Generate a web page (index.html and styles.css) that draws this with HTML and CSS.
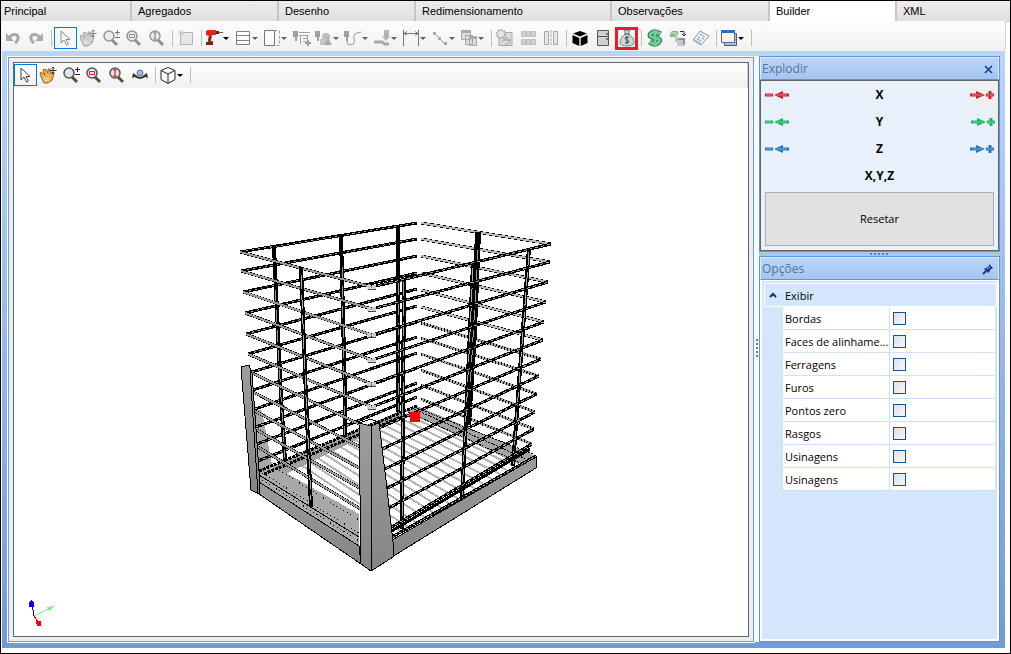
FILE: index.html
```html
<!DOCTYPE html>
<html lang="pt-BR">
<head>
  <meta charset="UTF-8" />
  <meta name="viewport" content="width=device-width, initial-scale=1.0"/>
  <title>Builder</title>
  <link rel="stylesheet" href="styles.css">
</head>
<body>
  <!-- shared icons -->
  <svg class="defs" aria-hidden="true">
    <symbol id="cursor" viewBox="0 0 20 20"><path d="M6 3v12l3-3 2.500 5 2-1-2.500-4.500h4z" fill="#fff" stroke="#444"/></symbol>
    <symbol id="hand" viewBox="0 0 20 20">
      <path d="M3 7l4 3-2-5 2-1 3 4V4h2l1 5 2-2 1 2-2 6-4 3H6l-2-4-2-5z" fill="#e8b15c" stroke="#9a5f18"/>
      <path d="M5 14l6-1M6 16l5-1" stroke="#fbe0a8"/>
      <path d="M11.500 5.500h7M15 2v7M13.500 3.500L15 2l1.500 1.500M13.500 7.500L15 9l1.500-1.500" stroke="#333" fill="none"/>
    </symbol>
    <symbol id="lens" viewBox="0 0 20 20">
      <path d="M11 12l5 5" stroke="#6b4a2b" stroke-width="3"/>
      <circle cx="8" cy="8" r="5" fill="#dbe6ec" stroke="#555" stroke-width="1.500"/>
      <path d="M5.500 7q1-2 3-2" stroke="#fff" fill="none"/>
    </symbol>
    <symbol id="zoom" viewBox="0 0 20 20"><use href="#lens"/><path d="M14 4.500h5M16.500 2v5M14 9.500h5" stroke="#222"/></symbol>
    <symbol id="zoom-window" viewBox="0 0 20 20"><use href="#lens"/><path d="M5.500 6.500h5v3h-5z" stroke="#c0282d" fill="none"/></symbol>
    <symbol id="zoom-fit" viewBox="0 0 20 20"><use href="#lens"/><path d="M8 4v8M6.500 5.500L8 4l1.500 1.500M6.500 10.500L8 12l1.500-1.500" stroke="#e0444a" fill="none" stroke-width="1.500"/></symbol>
    <symbol id="undo" viewBox="0 0 20 20"><path d="M6 11q2-6 8-4 3 4-2 8" fill="none" stroke="#777" stroke-width="3"/><path d="M3 5v8h8z" fill="#777"/></symbol>
    <symbol id="redo" viewBox="0 0 20 20"><path d="M14 11q-2-6-8-4-3 4 2 8" fill="none" stroke="#777" stroke-width="3"/><path d="M17 5v8H9z" fill="#777"/></symbol>
    <symbol id="tool" viewBox="0 0 20 20"><path d="M3 4h5v6H7v4H5v-4H3z" fill="#666"/></symbol>
    <symbol id="minus-arrow" viewBox="0 0 26 12">
      <path d="M1 6h8M17 6h8" stroke="currentColor" stroke-width="3"/>
      <path d="M10 6l9-4v8z" fill="currentColor"/>
      <path d="M2 6h6M13 6h10" stroke="#fff" stroke-opacity=".4"/>
    </symbol>
    <symbol id="arrow-plus" viewBox="0 0 26 12">
      <path d="M1 6h8M17 6h8M21 2v8" stroke="currentColor" stroke-width="3"/>
      <path d="M16 6L7 2v8z" fill="currentColor"/>
      <path d="M3 6h10M18 6h6" stroke="#fff" stroke-opacity=".4"/>
    </symbol>
  </svg>

  <div class="window">
    <nav class="tabs">
      <a class="tab" href="#">Principal</a>
      <a class="tab" href="#">Agregados</a>
      <a class="tab" href="#">Desenho</a>
      <a class="tab" href="#">Redimensionamento</a>
      <a class="tab" href="#">Observações</a>
      <a class="tab active" href="#">Builder</a>
      <a class="tab" href="#">XML</a>
    </nav>

    <div class="toolbar main-toolbar">
      <button class="tool disabled" aria-label="Desfazer"><svg class="icon"><use href="#undo"/></svg></button>
      <button class="tool disabled" aria-label="Refazer"><svg class="icon"><use href="#redo"/></svg></button>
      <span class="sep"></span>
      <button class="tool disabled selected" aria-label="Selecionar"><svg class="icon"><use href="#cursor"/></svg></button>
      <button class="tool disabled" aria-label="Mover"><svg class="icon"><use href="#hand"/></svg></button>
      <button class="tool disabled" aria-label="Zoom"><svg class="icon"><use href="#zoom"/></svg></button>
      <button class="tool disabled" aria-label="Zoom janela"><svg class="icon"><use href="#zoom-window"/></svg></button>
      <button class="tool disabled" aria-label="Zoom total"><svg class="icon"><use href="#zoom-fit"/></svg></button>
      <span class="sep"></span>
      <button class="tool disabled" aria-label="Novo"><svg class="icon" viewBox="0 0 20 20"><path d="M4.500 4.500h12v12h-12z" fill="#ddd" stroke="#888"/><path d="M5 2v6M2 5h6M3 3l4 4M7 3L3 7" stroke="#aaa"/></svg></button>
      <span class="sep"></span>
      <button class="tool drop" aria-label="Furação">
        <svg class="icon" viewBox="0 0 20 20"><path d="M2 3l2-1h8v5H8l-1 6h2v4H2v-3h2l1-6-3-1z" fill="#e2231a"/><path d="M2 14h7v3H2zM5 8h2l-1 5H4z" fill="#8d1712"/><path d="M12 3h3v3h-3z" fill="#333"/><path d="M15 4.500h4M4 3.500h6" stroke="#a44"/></svg>
        <span class="caret"></span>
      </button>
      <button class="tool drop disabled" aria-label="Divisões">
        <svg class="icon" viewBox="0 0 20 20"><path d="M3.500 3.500h13v13h-13zM3.500 7.500h13M3.500 12.500h13" fill="#fff" stroke="#333"/></svg>
        <span class="caret"></span>
      </button>
      <button class="tool drop disabled" aria-label="Painel">
        <svg class="icon" viewBox="0 0 20 20"><path d="M2.500 2.500h10v15h-10z" fill="#fff" stroke="#222"/><path d="M12.500 2.500h5v15h-5" fill="none" stroke="#666" stroke-dasharray="3 2"/></svg>
        <span class="caret"></span>
      </button>
      <button class="tool disabled" aria-label="Adicionar usinagem"><svg class="icon" viewBox="0 0 20 20"><use href="#tool" x="-2" y="-1" width="20" height="20"/><path d="M7 4.500h11M7.500 7.500h9M8.500 7v9M11 10.500h4M11 13.500h3M15.500 7v5" stroke="#666" fill="none"/><path d="M13 15h6M16 12v6" stroke="#666" stroke-width="2"/></svg></button>
      <button class="tool drop disabled" aria-label="Formas">
        <svg class="icon" viewBox="0 0 20 20"><use href="#tool" x="-2" y="-1" width="20" height="20"/><circle cx="12" cy="9" r="4" fill="#999"/><path d="M6 11h7v6H6z" fill="#aaa"/><path d="M14 10l4 7h-8z" fill="#777"/></svg>
        <span class="caret"></span>
      </button>
      <button class="tool drop disabled" aria-label="Caminho">
        <svg class="icon" viewBox="0 0 20 20"><use href="#tool" x="-2" y="-1" width="20" height="20"/><path d="M4 13q0 4 3 4 6-1 4-6-2-6 7-7" fill="none" stroke="#555"/></svg>
        <span class="caret"></span>
      </button>
      <button class="tool drop disabled" aria-label="Rebaixo">
        <svg class="icon" viewBox="0 0 20 20"><path d="M12 2h5v6h1l-4 5-4-5h2z" fill="#888"/><path d="M2 14h8l3 2h4" fill="none" stroke="#777" stroke-width="3"/></svg>
        <span class="caret"></span>
      </button>
      <button class="tool drop disabled" aria-label="Cota">
        <svg class="icon" viewBox="0 0 20 20"><path d="M2.500 2v16M17.500 2v16M3 5.500h14M6 3.500l-3 2 3 2M14 3.500l3 2-3 2" fill="none" stroke="#222"/></svg>
        <span class="caret"></span>
      </button>
      <button class="tool drop disabled" aria-label="Linha">
        <svg class="icon" viewBox="0 0 20 20"><path d="M4 5l11 11" stroke="#666"/><path d="M3 4h3v3H3zM8 9h3v3H8zM14 14h3v3h-3z" fill="#777"/></svg>
        <span class="caret"></span>
      </button>
      <button class="tool drop disabled" aria-label="Janelas">
        <svg class="icon" viewBox="0 0 20 20"><path d="M2.500 2.500h9v9h-9zM6.500 7.500h7v9h-7zM10.500 8.500h7v9h-7z" fill="#ccc" stroke="#777"/><path d="M2 3h10v2H2zM10 9h8v2h-8z" fill="#777"/></svg>
        <span class="caret"></span>
      </button>
      <span class="sep"></span>
      <button class="tool disabled" aria-label="Processar"><svg class="icon" viewBox="0 0 20 20"><path d="M4 4.500h13v13H4z" fill="#ccc" stroke="#777"/><circle cx="6" cy="6" r="4" fill="#ddd" stroke="#777" stroke-width="2" stroke-dasharray="2 1"/><path d="M7 14l4-5 4 5-5 3M9 12h7" fill="none" stroke="#666"/></svg></button>
      <button class="tool disabled" aria-label="Grade"><svg class="icon" viewBox="0 0 20 20"><path d="M3.500 3.500h4v5h-4zM8.500 3.500h4v5h-4zM13.500 3.500h4v5h-4zM3.500 11.500h4v5h-4zM8.500 11.500h4v5h-4zM13.500 11.500h4v5h-4z" fill="#bbb" stroke="#999"/></svg></button>
      <button class="tool disabled" aria-label="Espelhar"><svg class="icon" viewBox="0 0 20 20"><path d="M3.500 3.500h4v13h-4zM12.500 3.500h4v13h-4z" fill="#ddd" stroke="#777"/><path d="M10 2v16" stroke="#777" stroke-dasharray="3 1"/></svg></button>
      <span class="sep"></span>
      <button class="tool" aria-label="Módulo 3D"><svg class="icon" viewBox="0 0 20 20"><path d="M10 3l7 2.500-7 3-7-3zM2.500 7l6.800 3v8l-6.800-3zM17.500 7l-6.800 3v8l6.800-3z" fill="#000"/></svg></button>
      <button class="tool" aria-label="Porta"><svg class="icon" viewBox="0 0 20 20"><path d="M4.500 2.500h11v15h-11zM4.500 8.500h11" fill="#d0d0d0" stroke="#555"/><path d="M13 6h2M13 11h2" stroke="#222"/></svg></button>
      <button class="tool highlight" aria-label="Orçamento"><svg class="icon" viewBox="0 0 20 20"><path d="M7 3q3-2 6 0l-2 3q6 3 6 9-1 3-7 3t-7-3q0-6 6-9z" fill="#c9d8d8" stroke="#718689"/><path d="M7 6h6" stroke="#516669"/><path d="M12 9.500q-2-1-3.500 0t1.500 2.500 1.500 2.500-3.500 0M10 8v8" fill="none" stroke="#33484c"/></svg></button>
      <span class="sep"></span>
      <button class="tool" aria-label="Preço"><svg class="icon" viewBox="0 0 20 20"><path d="M15.500 6Q9 2 6 5.500T10 10t3.500 4.500T4.500 14M10 2v16" fill="none" stroke="#27794c" stroke-width="5"/><path d="M15.500 6Q9 2 6 5.500T10 10t3.500 4.500T4.500 14M10 2v16" fill="none" stroke="#71cc94" stroke-width="3"/></svg></button>
      <button class="tool" aria-label="Substituir peças"><svg class="icon" viewBox="0 0 20 20"><path d="M2 5l2-2h6v4l-2 2H2z" fill="#8cb98a"/><path d="M2 5h6v4" stroke="#d9ebd5" fill="none"/><path d="M7 9h3v5H7z" fill="#b5cbb0"/><path d="M9 12l2-2h6v6l-2 2H9z" fill="#8796a7"/><path d="M9 12h6v6H9z" fill="#c0cad4"/><path d="M12 3.500h4V8M14 6l2 2 2-2" stroke="#333" fill="none"/></svg></button>
      <button class="tool" aria-label="Relatório"><svg class="icon" viewBox="0 0 20 20"><path d="M9 3l9 5-8 9-8-5z" fill="#eef3f8" stroke="#8a9aa8"/><path d="M2 12l8 5v-2l-7-4z" fill="#a9b4bd"/><path d="M9 6l5 3M7 9l2 1M11 10l2 1M6 11l4 2" stroke="#4a83bd" stroke-dasharray="2 1"/></svg></button>
      <span class="sep"></span>
      <button class="tool drop" aria-label="Painéis">
        <svg class="icon" viewBox="0 0 20 20"><path d="M5.500 5.500h12v12h-12z" fill="#a7bfe0" stroke="#445a80"/><path d="M2.500 2.500h13v12h-13z" fill="#f4f3ea" stroke="#667"/><path d="M2 2h14v3H2z" fill="#3768b4"/></svg>
        <span class="caret"></span>
      </button>
      <span class="sep"></span>
    </div>

    <main class="workspace">
      <section class="viewer">
        <div class="canvas">
          <div class="toolbar view-toolbar">
            <button class="tool selected" aria-label="Selecionar"><svg class="icon"><use href="#cursor"/></svg></button>
            <button class="tool" aria-label="Mover"><svg class="icon"><use href="#hand"/></svg></button>
            <button class="tool" aria-label="Zoom"><svg class="icon"><use href="#zoom"/></svg></button>
            <button class="tool" aria-label="Zoom janela"><svg class="icon"><use href="#zoom-window"/></svg></button>
            <button class="tool" aria-label="Zoom total"><svg class="icon"><use href="#zoom-fit"/></svg></button>
            <button class="tool" aria-label="Orbitar"><svg class="icon" viewBox="0 0 20 20"><path d="M4 10q6 6 12 0" fill="none" stroke="#333" stroke-width="2"/><path d="M2 13l1-5 4 3zM18 13l-1-5-4 3z" fill="#333"/><circle cx="10" cy="8" r="3" fill="#9cb6dc" stroke="#5c7198"/></svg></button>
            <span class="sep"></span>
            <button class="tool drop" aria-label="Vistas">
              <svg class="icon" viewBox="0 0 20 20"><path d="M10 2.500l7 3v9l-7 4-7-4v-9zM3 5.500l7 3.500 7-3.500M10 9v9" fill="#fff" stroke="#222"/></svg>
              <span class="caret"></span>
            </button>
            <span class="sep"></span>
          </div>

          <svg class="scene" viewBox="14 88 734 548" role="img" aria-label="Cesto aramado">
            <defs>
              <linearGradient id="steel" x1="0" y1="0" x2="0" y2="1">
                <stop offset="0" stop-color="#9d9d9d"/>
                <stop offset="1" stop-color="#858585"/>
              </linearGradient>
              <!-- horizontal wires, one segment per level -->
              <path id="wires-back-left" d="M240 252L417 223M241 271L417 239M243 292L417 256M245 313L417 273M246 334L417 289M248 354L417 306M252 372L417 322M253 390L417 337M255 409L417 353M256 427L417 368M257 444L417 383M258 461L417 397"/>
              <path id="wires-back-right" d="M421 223L551 244M421 239L550 262M421 256L548 282M421 273L546 302M421 290L544 322M421 307L543 340"/>
              <path id="wires-back-low" d="M421 323L541 359M421 338L539 376M421 354L537 394M421 370L535 412M421 385L534 429M421 399L532 444"/>
              <path id="wires-front-left" d="M240 252L372 287M241 271L372 309M243 292L372 335M245 313L372 360M246 334L372 384M248 354L372 407M252 373L372 430M253 392L372 453M255 411L372 475M257 430L372 495M258 447L372 516"/>
              <path id="wires-front-right" d="M372 287L551 244M372 309L550 262M372 335L548 282M372 360L546 302M372 384L544 322M372 407L543 340M374 430L541 359M378 451L539 376M381 471L537 394M384 490L535 412M387 509L534 429M390 528L532 444"/>
              <path id="floor" d="M414 411L522 462M406 414L514 466M398 417L507 470M390 420L500 474M382 424L492 479M374 427L484 484M366 430L476 489M358 433L467 494M350 437L459 499M342 440L450 504M334 443L442 508M326 447L434 513M318 450L426 518M310 453L417 523M302 457L408 527M294 460L400 531"/>
            </defs>

            <g shape-rendering="crispEdges" fill="none" stroke="#000">
              <use href="#floor" stroke="#b4b4b4" stroke-width="2"/>

              <!-- base behind the wires -->
              <path d="M255 408L262 411 272 465 359 514V546L259 482z" fill="#a9a9a9" stroke="none"/>
              <path d="M272 466L400 411 404 417 286 474z" fill="#a0a0a0" stroke="none"/>
              <path d="M405 411L417 406 536 456 518 464z" fill="#a3a3a3" stroke="none"/>
              <path d="M259 471L417 406M264 474L406 415" stroke-width="3" stroke-dasharray="3 1"/>
              <path d="M414 407L533 454M408 412L520 463M414 409L526 459" stroke-dasharray="2 1"/>
              <path d="M259 471L359 533M259 478L359 541M272 466L359 520" stroke-dasharray="1 3"/>
              <path d="M259 475L359 537M259 482L359 546"/>

              <use href="#wires-back-right" stroke-width="3"/>
              <use href="#wires-back-right" stroke="#b8b8b8" stroke-width="2"/>
              <use href="#wires-back-low" stroke="#aaa" stroke-width="3"/>
              <use href="#wires-back-low" stroke-width="3" stroke-dasharray="1 2"/>
              <use href="#wires-back-left" stroke-width="3"/>
              <use href="#wires-back-left" stroke="#aaa" stroke-dasharray="2 4"/>

              <!-- vertical wires -->
              <path d="M274 247L281 397 285 461M341 235L345 397V437M398 225V412" stroke-width="4"/>
              <path d="M478 232L474 330 468 425" stroke-width="6"/>
              <path d="M275 290L281 397 285 458M342 266L345 435M398 283V410M478 250L470 390" stroke="#999" stroke-dasharray="12 8"/>

              <use href="#wires-front-left" stroke-width="3"/>
              <use href="#wires-front-left" stroke="#999" stroke-width="2"/>
              <path d="M301 267L306 397 311 507M404 280L402 529M473 264L467 397 462 497M529 248L518 397 513 466" stroke-width="4"/>
              <path d="M301 275L306 397 311 500M404 282L402 527M473 268L467 397 462 495M529 252L518 397 513 464" stroke="#aaa" stroke-dasharray="14 6"/>
              <use href="#wires-front-right" stroke-width="3"/>
              <use href="#wires-front-right" stroke="#aaa" stroke-dasharray="3 3"/>
              <path d="M367 287h10M367 309h10M367 335h10M367 360h10M367 384h10M367 407h10" stroke="#ccc" stroke-width="4" stroke-dasharray="4 1"/>
              <path d="M368 289h8M368 311h8M368 337h8M368 362h8M368 386h8M368 409h8" stroke="#444"/>

              <!-- bottom rails -->
              <path d="M259 482L359 546 361 564 259 494z" fill="url(#steel)"/>
              <path d="M392 540L536 457V468L392 557z" fill="url(#steel)"/>
              <path d="M390 532L530 449M392 537L536 456" stroke-width="3"/>
              <path d="M392 537L536 456" stroke="#aaa" stroke-dasharray="2 2"/>

              <!-- posts -->
              <path d="M241 367L249 365 252 373 259 471V494L251 490z" fill="url(#steel)"/>
              <path d="M250 370L258 494"/>
              <path d="M359 423L371 426 379 423 386 480 393 542V557L371 571 361 564z" fill="url(#steel)"/>
              <path d="M359 423L371 419 380 423M371 426V571"/>
            </g>

            <path d="M410 412h10v10h-10z" fill="#f00"/>

            <!-- axis triad -->
            <g shape-rendering="crispEdges">
              <path d="M34 616L32 604" stroke="#00f"/>
              <path d="M29 602l2-2 3 2v5h-5z" fill="#00f"/>
              <path d="M34 616L48 609" stroke="#8e8"/>
              <path d="M47 607l8-1-6 5z" fill="#8e8"/>
              <path d="M34 616L38 622" stroke="#f00"/>
              <path d="M36 621h5v5h-4z" fill="#f00"/>
            </g>
          </svg>
        </div>
      </section>

      <div class="splitter"><span class="grip vertical"></span></div>

      <aside class="side">
        <section class="panel">
          <header class="panel-head">
            <h2>Explodir</h2>
            <button class="head-btn" aria-label="Fechar"><svg width="10" height="10" viewBox="0 0 10 10"><path d="M1 2l7 7M8 2L1 9" stroke="#153a7c" stroke-width="1.500"/></svg></button>
          </header>
          <div class="explode">
            <div class="axis red">
              <button class="axis-btn" aria-label="Diminuir X"><svg><use href="#minus-arrow"/></svg></button>
              <span>X</span>
              <button class="axis-btn hover" aria-label="Aumentar X"><svg><use href="#arrow-plus"/></svg></button>
            </div>
            <div class="axis green">
              <button class="axis-btn" aria-label="Diminuir Y"><svg><use href="#minus-arrow"/></svg></button>
              <span>Y</span>
              <button class="axis-btn" aria-label="Aumentar Y"><svg><use href="#arrow-plus"/></svg></button>
            </div>
            <div class="axis blue">
              <button class="axis-btn" aria-label="Diminuir Z"><svg><use href="#minus-arrow"/></svg></button>
              <span>Z</span>
              <button class="axis-btn" aria-label="Aumentar Z"><svg><use href="#arrow-plus"/></svg></button>
            </div>
            <div class="axis">
              <button class="axis-btn" aria-label="Diminuir todos"></button>
              <span>X,Y,Z</span>
              <button class="axis-btn" aria-label="Aumentar todos"></button>
            </div>
            <button class="reset">Resetar</button>
          </div>
        </section>

        <div class="row-splitter"><span class="grip"></span></div>

        <section class="panel options">
          <header class="panel-head">
            <h2>Opções</h2>
            <button class="head-btn" aria-label="Fixar"><svg width="12" height="12" viewBox="0 0 12 12"><path d="M7 1l4 4-2 1-2 3-1 1-4-4 2-1 3-2z" fill="#153a7c"/><path d="M4 8l-3 3" stroke="#153a7c" stroke-width="2"/><path d="M5 6l3-2" stroke="#9dbdea"/></svg></button>
          </header>
          <div class="options-body">
            <div class="group">
              <svg width="8" height="6" viewBox="0 0 8 6"><path d="M1 5l3-3 3 3" fill="none" stroke="#12305f" stroke-width="2"/></svg>
              <span>Exibir</span>
            </div>
            <table class="props">
              <tr><th><label for="bordas">Bordas</label></th><td><input type="checkbox" id="bordas"></td></tr>
              <tr><th><label for="faces">Faces de alinhame...</label></th><td><input type="checkbox" id="faces"></td></tr>
              <tr><th><label for="ferragens">Ferragens</label></th><td><input type="checkbox" id="ferragens"></td></tr>
              <tr><th><label for="furos">Furos</label></th><td><input type="checkbox" id="furos"></td></tr>
              <tr><th><label for="pontos">Pontos zero</label></th><td><input type="checkbox" id="pontos"></td></tr>
              <tr><th><label for="rasgos">Rasgos</label></th><td><input type="checkbox" id="rasgos"></td></tr>
              <tr><th><label for="usinagens">Usinagens</label></th><td><input type="checkbox" id="usinagens"></td></tr>
              <tr><th><label for="usinagens2">Usinagens</label></th><td><input type="checkbox" id="usinagens2"></td></tr>
            </table>
          </div>
        </section>
      </aside>
    </main>
  </div>
</body>
</html>
```
FILE: styles.css
```css
* {
  box-sizing: border-box;
}
body {
  margin: 0;
  font-family: "Open Sans", "Noto Sans", sans-serif;
  font-size: 11px;
  color: #000;
  background: #fff;
}
button {
  font: inherit;
  color: inherit;
  border: 0;
  padding: 0;
  background: none;
}
.defs {
  position: absolute;
  width: 0;
  height: 0;
}
.window {
  display: flex;
  flex-direction: column;
  min-height: 100vh;
  border: 1px solid #000;
}

/* tabs */
.tabs {
  display: grid;
  grid-template-columns: 131fr 147fr 137fr 196fr 158fr 127fr 113fr;
  height: 20px;
}
.tab {
  padding-left: 6px;
  border-right: 2px solid #c6c6c6;
  border-bottom: 1px solid #d0d0d0;
  background: linear-gradient(#ececec, #e0e0e0);
  font-family: "Liberation Sans", Arial, sans-serif;
  line-height: 20px;
  color: #000;
  text-decoration: none;
}
.tab:first-child {
  padding-left: 3px;
}
.tab:last-child {
  border-right: 0;
}
.tab.active {
  background: #fff;
  border-bottom-color: #fff;
}

/* toolbars */
.toolbar {
  display: flex;
  align-items: center;
  background: linear-gradient(#fdfdfd, #f1f1f1);
}
.main-toolbar {
  height: 30px;
  margin-right: 4px;
  padding: 4px 1px 0;
  border-right: 1px solid #d0d0d0;
  border-radius: 0 0 4px 4px;
}
.view-toolbar {
  height: 25px;
  padding-bottom: 1px;
  border-right: 1px solid #d0d0d0;
}
.tool {
  display: flex;
  align-items: center;
  justify-content: center;
  flex: none;
  width: 23px;
  height: 22px;
  padding-right: 2px;
}
.drop {
  width: 29px;
  padding-right: 0;
  justify-content: flex-start;
}
.selected {
  border: 1px solid #0078d7;
}
.highlight {
  height: 23px;
  border: 3px solid #ed1c24;
  padding: 0;
}
.icon {
  flex: none;
  width: 20px;
  height: 20px;
}
.disabled .icon,
.disabled .caret {
  filter: grayscale(1);
  opacity: 0.6;
}
.caret {
  margin-left: -1px;
  border: 3px solid transparent;
  border-top-color: #000;
  border-bottom: 0;
}
.sep {
  flex: none;
  width: 6px;
  height: 16px;
  background: linear-gradient(#bdbdbd, #bdbdbd) center / 1px 100% no-repeat;
}

/* workspace */
.workspace {
  display: flex;
  flex: 1;
  margin: 0 5px 5px 1px;
  padding: 5px 5px 6px 6px;
  background: linear-gradient(#b9d5fc, #6f9bd7);
}
.viewer {
  display: flex;
  flex: 1;
  min-width: 0;
  margin-top: 1px;
  padding: 4px;
  border: 1px solid #6f9bd7;
  background: #e6effa;
  box-shadow: 0 0 0 1px #fff;
}
.canvas {
  display: flex;
  flex-direction: column;
  flex: 1;
  min-width: 0;
  border: 1px solid #646464;
  background: #fff;
}
.scene {
  flex: 1;
  width: 100%;
  min-height: 0;
}
.splitter {
  display: flex;
  align-items: center;
  justify-content: center;
  width: 5px;
  background: #f6f9fe;
}
.row-splitter {
  display: flex;
  align-items: center;
  justify-content: center;
  height: 4px;
  background: #a7c6f2;
}
.grip {
  width: 20px;
  height: 2px;
  background: repeating-linear-gradient(90deg, #5580c0 0 2px, transparent 2px 4px);
}
.grip.vertical {
  width: 2px;
  height: 20px;
  background: repeating-linear-gradient(#5580c0 0 2px, transparent 2px 4px);
}

/* side panels */
.side {
  display: flex;
  flex-direction: column;
  flex: none;
  width: 241px;
}
.panel {
  border: 1px solid #6593cf;
}
.panel-head {
  display: flex;
  align-items: center;
  justify-content: space-between;
  height: 23px;
  padding: 0 4px 0 1px;
  border: 1px solid #dbe9fc;
  border-bottom: 1px solid #6593cf;
  background: linear-gradient(#b8d4fb, #a5c5ef);
}
.panel-head h2 {
  margin: 0;
  font-size: 12px;
  font-weight: normal;
  color: #5a7296;
}
.head-btn {
  display: flex;
}
.explode {
  padding: 0 4px 4px;
  border: 1px solid #646464;
  background: #e8f0fb;
}
.axis {
  display: flex;
  align-items: center;
  justify-content: space-between;
  height: 27px;
  margin: 0 -4px;
  font-size: 12px;
  font-weight: 700;
}
.axis-btn {
  width: 31px;
  height: 27px;
  border: 1px solid #eceff5;
}
.axis-btn.hover {
  background: #efefef;
}
.axis-btn svg {
  display: block;
  width: 26px;
  height: 12px;
  margin: 0 auto;
}
.red svg {
  color: #d2232a;
}
.green svg {
  color: #1fb35e;
}
.blue svg {
  color: #1f77c4;
}
.reset {
  display: block;
  width: 100%;
  height: 54px;
  margin-top: 3px;
  padding-bottom: 2px;
  border: 1px solid #adadad;
  background: #e1e1e1;
}
.options {
  display: flex;
  flex-direction: column;
  flex: 1;
}
.options-body {
  flex: 1;
  padding: 3px 1px 0 3px;
  border: 2px solid #fff;
  border-top-width: 1px;
  background: #d4e6fc;
}
.group {
  display: flex;
  align-items: center;
  gap: 8px;
  height: 22px;
  padding-left: 4px;
  outline: 1px solid #fff;
}
.props {
  width: calc(100% - 17px);
  margin-left: 17px;
  border-collapse: collapse;
  background: #fff;
}
.props tr {
  height: 23px;
}
.props th,
.props td {
  padding: 0;
  border: 1px solid #d0e0f5;
  text-align: left;
}
.props th {
  width: 107px;
  padding-left: 2px;
  font-weight: normal;
  white-space: nowrap;
}
.props td {
  padding-left: 3px;
}
.props input {
  display: block;
  appearance: none;
  width: 13px;
  height: 13px;
  margin: 0;
  border: 1px solid #1c5180;
  background: linear-gradient(135deg, #dcdfe8, #f8f8fb);
}
```
